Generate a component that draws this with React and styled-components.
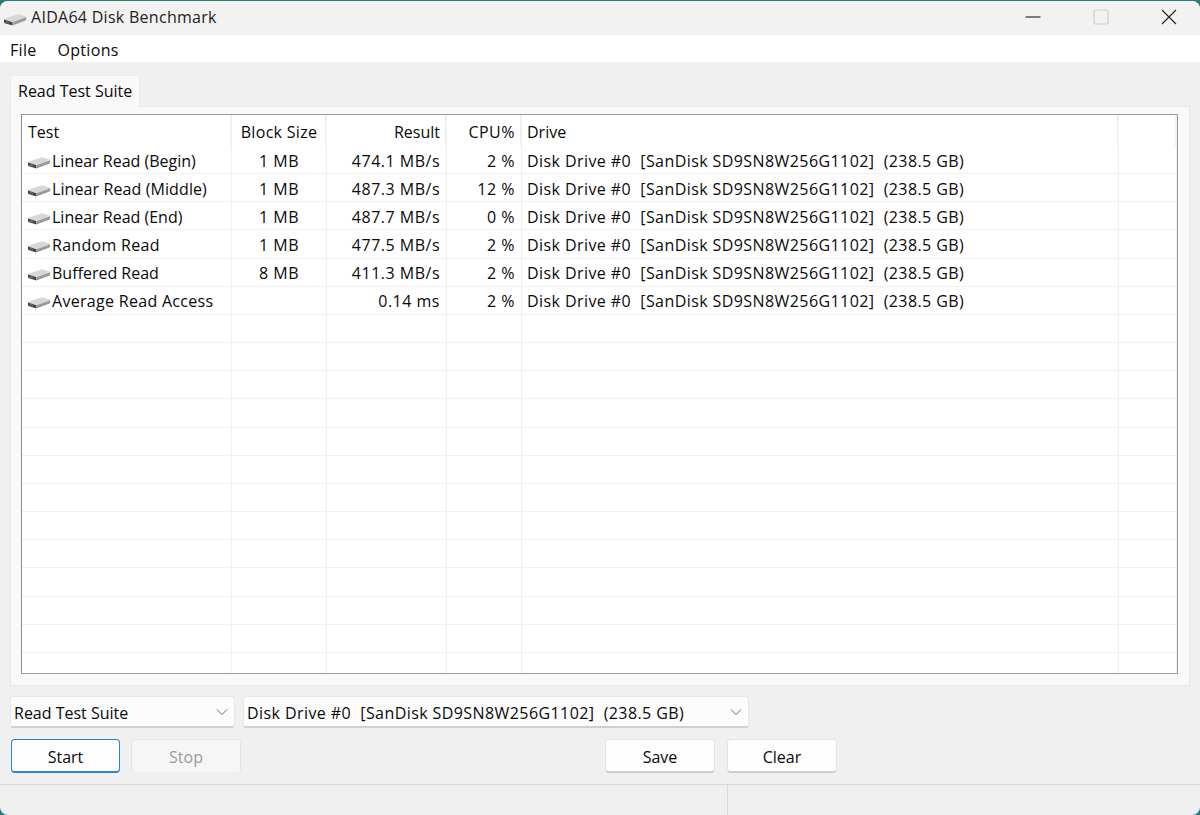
import React from 'react';
import styled, { createGlobalStyle } from 'styled-components';

const GlobalStyle = createGlobalStyle`
    html, body {
        margin: 0;
        padding: 0;
        background: #2b7a78;
    }
    #root {
        height: 815px;
        overflow: hidden;
    }
`;

const columns = '210px 95px 120px 75px 597px 1fr';

const Window = styled.div`
    box-sizing: border-box;
    width: 1200px;
    height: 814px;
    margin-top: 1px;
    display: flex;
    flex-direction: column;
    background: #f0f0f0;
    border-radius: 8px;
    overflow: hidden;
    font-family: "Open Sans", "Noto Sans", sans-serif;
    font-size: 16px;
    color: #0a0a0a;
`;
const TitleBar = styled.div`
    height: 34px;
    flex: none;
    display: flex;
    align-items: center;
    background: #f2f2f2;
    padding: 0 23px 0 4px;
`;
const Title = styled.span`
    margin-left: 4px;
    flex: 1;
    position: relative;
    top: -1px;
    letter-spacing: 0.28px;
    color: #222;
`;
const WinButtons = styled.div`
    display: flex;
    gap: 52px;
`;
const WinButton = styled.div`
    width: 16px;
    height: 16px;
    display: flex;
    position: relative;
    top: -1px;
`;
const MenuBar = styled.div`
    height: 27px;
    flex: none;
    display: flex;
    align-items: center;
    gap: 21px;
    padding: 2px 0 0 10px;
    box-sizing: border-box;
    background: #fff;
`;
const MenuItem = styled.span`
    letter-spacing: 0.3px;
`;
const Content = styled.div`
    flex: 1;
    display: flex;
    flex-direction: column;
    padding: 13px 10px 0;
`;
const TabStrip = styled.div`
    height: 31px;
    display: flex;
`;
const Tab = styled.div`
    box-sizing: border-box;
    width: 130px;
    height: 32px;
    padding: 4px 0 0 7px;
    background: #f9f9f9;
    border: 1px solid #ececec;
    border-bottom: none;
    position: relative;
    z-index: 1;
`;
const TabPanel = styled.div`
    box-sizing: border-box;
    height: 580px;
    padding: 7px 11px 11px 10px;
    background: #f9f9f9;
    border: 1px solid #e8e8e8;
`;
const ListView = styled.div`
    box-sizing: border-box;
    height: 560px;
    background: #fff;
    border: 1px solid #9a9a9f;
    border-left-color: #8a8a8a;
    overflow: hidden;
`;
const HeaderRow = styled.div`
    display: grid;
    grid-template-columns: ${columns};
    height: 31px;
`;
const HeaderCell = styled.div`
    display: flex;
    align-items: center;
    justify-content: ${p => (p.$align === 'right' ? 'flex-end' : p.$align === 'center' ? 'center' : 'flex-start')};
    padding: 3px 5px 0 ${p => p.$left ?? 6}px;
    border-right: 2px solid #f0f0f0;
    box-sizing: border-box;
    height: 31px;
    white-space: nowrap;
    letter-spacing: ${p => p.$track || 0}px;
`;
const Row = styled.div`
    display: grid;
    grid-template-columns: ${columns};
    height: 28.17px;
    box-sizing: border-box;
    border-bottom: 1px solid #f0f0f0;
`;
const Cell = styled.div`
    display: flex;
    align-items: center;
    justify-content: ${p => (p.$align === 'right' ? 'flex-end' : p.$align === 'center' ? 'center' : 'flex-start')};
    padding: 2px 6px 0 ${p => p.$left ?? 6}px;
    box-sizing: border-box;
    border-right: 1px solid #f0f0f0;
    white-space: pre;
    overflow: hidden;
    letter-spacing: ${p => p.$track || 0}px;
`;
const TestName = styled.span`
    margin-left: 1px;
    letter-spacing: ${p => p.$track || 0}px;
`;
const Controls = styled.div`
    display: flex;
    flex-direction: column;
    gap: 11px;
    padding-top: 10px;
`;
const ControlRow = styled.div`
    display: flex;
    align-items: flex-start;
`;
const Combo = styled.div`
    box-sizing: border-box;
    width: ${p => p.$width}px;
    margin-right: ${p => p.$gap || 0}px;
    height: 32px;
    display: flex;
    align-items: center;
    justify-content: space-between;
    padding: 3px 6px 0 3px;
    background: #fcfcfc;
    border: 1px solid #e6e6e6;
    border-bottom: 2px solid #cfcfcf;
    border-radius: 3px;
    white-space: pre;
    letter-spacing: ${p => p.$track || 0}px;
`;
const Button = styled.div`
    box-sizing: border-box;
    width: ${p => p.$width || 109}px;
    height: 34px;
    margin-left: ${p => p.$left || 0}px;
    padding-top: ${p => (p.$disabled ? 1 : 3)}px;
    display: flex;
    align-items: center;
    justify-content: center;
    border-radius: 4px;
    background: ${p => (p.$disabled ? '#f6f6f6' : '#fdfdfd')};
    color: ${p => (p.$disabled ? '#9a9a9a' : '#0a0a0a')};
    border: ${p => (p.$primary ? '1px solid #2a86d1' : '1px solid #e5e5e5')};
    border-bottom: ${p => (p.$primary ? '2px solid #2a86d1' : p.$disabled ? '1px solid #eeeeee' : '2px solid #cccccc')};
`;
const StatusBar = styled.div`
    flex: 1;
    margin-top: 11px;
    display: flex;
    border-top: 1px solid #d9d9d9;
`;
const StatusPane = styled.div`
    width: 727px;
    border-right: 1px solid #d9d9d9;
`;

function DiskIcon() {
    return (
        <svg width="24" height="16" viewBox="0 0 24 16" style={{ flex: 'none', marginLeft: -1 }}>
            <path d="M1 9.5 Q1 8.8 2 8.5 L14 4.5 Q15 4.2 16 4.5 L22.5 6.5 Q23.5 7 23 7.5 L10.5 12 Q9.5 12.3 8.5 12 Z" fill="#d8d8d8" />
            <path d="M1 9.5 L9.5 12.2 L9.5 15.5 L2 13.2 Q1 12.8 1 12 Z" fill="#454545" />
            <path d="M9.5 12.2 L23.2 7.2 L23.2 9.5 Q23 10.3 22 10.7 L9.5 15.5 Z" fill="#9a9a9a" />
            <path d="M3 11.2 L6 12.2 L6 13.2 L3 12.2 Z" fill="#45b565" />
        </svg>
    );
}

function Chevron() {
    return (
        <svg width="12" height="8" viewBox="0 0 12 8" style={{ marginTop: -3 }}>
            <path d="M1 1.5 L6 6.5 L11 1.5" fill="none" stroke="#666" strokeWidth="1" />
        </svg>
    );
}

const DRIVE = 'Disk Drive #0  [SanDisk SD9SN8W256G1102]  (238.5 GB)';

const RESULTS = [
    { test: 'Linear Read (Begin)', block: '1 MB', result: '474.1 MB/s', cpu: '2 %' },
    { test: 'Linear Read (Middle)', block: '1 MB', result: '487.3 MB/s', cpu: '12 %', track: 0.1 },
    { test: 'Linear Read (End)', block: '1 MB', result: '487.7 MB/s', cpu: '0 %' },
    { test: 'Random Read', block: '1 MB', result: '477.5 MB/s', cpu: '2 %', track: 0.3 },
    { test: 'Buffered Read', block: '8 MB', result: '411.3 MB/s', cpu: '2 %' },
    { test: 'Average Read Access', block: '', result: '0.14 ms', cpu: '2 %', track: 0.3 },
];

const EMPTY_ROWS = Array.from({ length: 13 }, (_, i) => i);

export default function App() {
    return (
        <>
            <GlobalStyle />
            <Window>
                <TitleBar>
                    <DiskIcon />
                    <Title>AIDA64 Disk Benchmark</Title>
                    <WinButtons>
                        <WinButton>
                            <svg width="16" height="16" viewBox="0 0 16 16">
                                <path d="M0.5 8 H15.5" stroke="#555" strokeWidth="1.4" />
                            </svg>
                        </WinButton>
                        <WinButton>
                            <svg width="16" height="16" viewBox="0 0 16 16">
                                <rect x="1" y="1" width="14" height="14" rx="1.5" fill="none" stroke="#cbcbcb" strokeWidth="1.2" />
                            </svg>
                        </WinButton>
                        <WinButton>
                            <svg width="16" height="16" viewBox="0 0 16 16">
                                <path d="M1 1 L15 15 M15 1 L1 15" stroke="#1f1f1f" strokeWidth="1.1" />
                            </svg>
                        </WinButton>
                    </WinButtons>
                </TitleBar>
                <MenuBar>
                    <MenuItem>File</MenuItem>
                    <MenuItem>Options</MenuItem>
                </MenuBar>
                <Content>
                    <TabStrip>
                        <Tab>Read Test Suite</Tab>
                    </TabStrip>
                    <TabPanel>
                        <ListView>
                            <HeaderRow>
                                <HeaderCell>Test</HeaderCell>
                                <HeaderCell $align="center" $track={0.3}>Block Size</HeaderCell>
                                <HeaderCell $align="right">Result</HeaderCell>
                                <HeaderCell $align="right" $track={0.5}>CPU%</HeaderCell>
                                <HeaderCell $left={5}>Drive</HeaderCell>
                                <HeaderCell />
                            </HeaderRow>
                            {RESULTS.map(row => (
                                <Row key={row.test}>
                                    <Cell>
                                        <DiskIcon />
                                        <TestName $track={row.track}>{row.test}</TestName>
                                    </Cell>
                                    <Cell $align="center" $track={0.5}>{row.block}</Cell>
                                    <Cell $align="right" $track={0.5}>{row.result}</Cell>
                                    <Cell $align="right" $track={0.5}>{row.cpu}</Cell>
                                    <Cell $left={5} $track={0.42}>{DRIVE}</Cell>
                                    <Cell />
                                </Row>
                            ))}
                            {EMPTY_ROWS.map(i => (
                                <Row key={i}>
                                    <Cell />
                                    <Cell />
                                    <Cell />
                                    <Cell />
                                    <Cell />
                                    <Cell />
                                </Row>
                            ))}
                        </ListView>
                    </TabPanel>
                    <Controls>
                        <ControlRow>
                            <Combo $width={225} $gap={8}>
                                <span>Read Test Suite</span>
                                <Chevron />
                            </Combo>
                            <Combo $width={506} $track={0.42}>
                                <span>{DRIVE}</span>
                                <Chevron />
                            </Combo>
                        </ControlRow>
                        <ControlRow>
                            <Button $primary $left={1}>Start</Button>
                            <Button $disabled $left={11} $width={110}>Stop</Button>
                            <Button $left={364} $width={110}>Save</Button>
                            <Button $left={12} $width={110}>Clear</Button>
                        </ControlRow>
                    </Controls>
                </Content>
                <StatusBar>
                    <StatusPane />
                </StatusBar>
            </Window>
        </>
    );
}
